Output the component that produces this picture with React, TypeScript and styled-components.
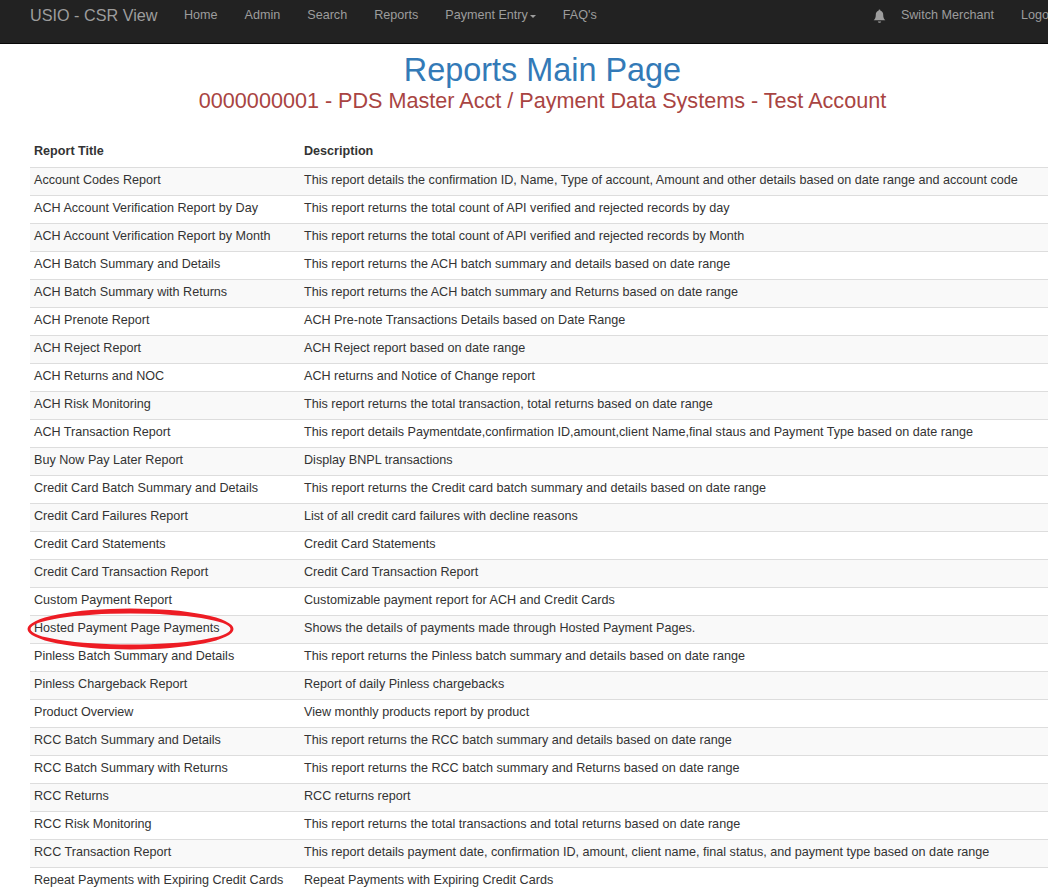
import styled, { createGlobalStyle } from "styled-components";

type Report = [string, string];

const reports: Report[] = [
  ["Account Codes Report", "This report details the confirmation ID, Name, Type of account, Amount and other details based on date range and account code"],
  ["ACH Account Verification Report by Day", "This report returns the total count of API verified and rejected records by day"],
  ["ACH Account Verification Report by Month", "This report returns the total count of API verified and rejected records by Month"],
  ["ACH Batch Summary and Details", "This report returns the ACH batch summary and details based on date range"],
  ["ACH Batch Summary with Returns", "This report returns the ACH batch summary and Returns based on date range"],
  ["ACH Prenote Report", "ACH Pre-note Transactions Details based on Date Range"],
  ["ACH Reject Report", "ACH Reject report based on date range"],
  ["ACH Returns and NOC", "ACH returns and Notice of Change report"],
  ["ACH Risk Monitoring", "This report returns the total transaction, total returns based on date range"],
  ["ACH Transaction Report", "This report details Paymentdate,confirmation ID,amount,client Name,final staus and Payment Type based on date range"],
  ["Buy Now Pay Later Report", "Display BNPL transactions"],
  ["Credit Card Batch Summary and Details", "This report returns the Credit card batch summary and details based on date range"],
  ["Credit Card Failures Report", "List of all credit card failures with decline reasons"],
  ["Credit Card Statements", "Credit Card Statements"],
  ["Credit Card Transaction Report", "Credit Card Transaction Report"],
  ["Custom Payment Report", "Customizable payment report for ACH and Credit Cards"],
  ["Hosted Payment Page Payments", "Shows the details of payments made through Hosted Payment Pages."],
  ["Pinless Batch Summary and Details", "This report returns the Pinless batch summary and details based on date range"],
  ["Pinless Chargeback Report", "Report of daily Pinless chargebacks"],
  ["Product Overview", "View monthly products report by product"],
  ["RCC Batch Summary and Details", "This report returns the RCC batch summary and details based on date range"],
  ["RCC Batch Summary with Returns", "This report returns the RCC batch summary and Returns based on date range"],
  ["RCC Returns", "RCC returns report"],
  ["RCC Risk Monitoring", "This report returns the total transactions and total returns based on date range"],
  ["RCC Transaction Report", "This report details payment date, confirmation ID, amount, client name, final status, and payment type based on date range"],
  ["Repeat Payments with Expiring Credit Cards", "Repeat Payments with Expiring Credit Cards"],
];

const GlobalStyle = createGlobalStyle`
  html, body {
    margin: 0;
    height: 895px;
    overflow: hidden;
    background: #fff;
  }
  body {
    font-family: "Liberation Sans", Arial, sans-serif;
    font-size: 12.6px;
    color: #333;
  }
`;

const Page = styled.div`
  width: 1085px;
`;

const Navbar = styled.nav`
  display: flex;
  align-items: flex-start;
  height: 43px;
  padding: 0 12px 0 30px;
  background: #222;
  border-bottom: 1px solid #080808;
`;

const Brand = styled.a`
  font-size: 16.2px;
  line-height: 31px;
  color: #9d9d9d;
  margin-right: 13px;
`;

const NavItem = styled.a`
  display: flex;
  align-items: center;
  gap: 2px;
  height: 30px;
  padding: 0 13.5px;
  color: #9d9d9d;
`;

const BellItem = styled.a`
  display: flex;
  align-items: center;
  height: 31px;
  padding-right: 1px;
`;

const Caret = styled.span`
  width: 0;
  height: 0;
  margin-top: 2px;
  border-top: 3.6px solid #9d9d9d;
  border-left: 3.6px solid transparent;
  border-right: 3.6px solid transparent;
`;

const Bell = styled.svg`
  width: 13px;
  height: 16px;
  fill: #9d9d9d;
`;

const RightNav = styled.div`
  display: flex;
  margin-left: auto;
`;

const Heading = styled.header`
  padding-top: 8px;
  text-align: center;
`;

const Title = styled.h1`
  margin: 0;
  font-size: 32.4px;
  font-weight: 400;
  line-height: 36px;
  color: #337ab7;
`;

const Subtitle = styled.h2`
  margin: 0;
  font-size: 21.6px;
  font-weight: 400;
  line-height: 26px;
  color: #a94442;
`;

const TableWrap = styled.div`
  padding: 21px 30px 0;
`;

const Table = styled.table`
  width: 100%;
  border-collapse: collapse;
`;

const HeadCell = styled.th`
  height: 32px;
  padding: 0 4px;
  border-bottom: 1.5px solid #ddd;
  text-align: left;
  font-weight: 700;
`;

const Row = styled.tr<{ $striped: boolean }>`
  background: ${(p) => (p.$striped ? "#f9f9f9" : "#fff")};
`;

const Cell = styled.td<{ $first?: boolean }>`
  position: relative;
  width: ${(p) => (p.$first ? "262px" : "auto")};
  height: 23px;
  padding: 0 4px 4px;
  border-bottom: 1px solid #ddd;
  white-space: nowrap;
`;

const Oval = styled.svg`
  position: absolute;
  left: -3px;
  top: -8px;
  width: 207px;
  height: 42px;
  fill: #ed1c24;
  fill-rule: evenodd;
  pointer-events: none;
`;

export default function App() {
  return (
    <Page>
      <GlobalStyle />
      <Navbar>
        <Brand>USIO - CSR View</Brand>
        <NavItem>Home</NavItem>
        <NavItem>Admin</NavItem>
        <NavItem>Search</NavItem>
        <NavItem>Reports</NavItem>
        <NavItem>
          Payment Entry
          <Caret />
        </NavItem>
        <NavItem>FAQ's</NavItem>
        <RightNav>
          <BellItem>
            <Bell viewBox="0 0 14 15">
              <path d="M7 0.4c.6 0 1 .4 1 1v.5c2 .5 3 2.2 3 4.3 0 3 .6 4.4 2.3 6H.7c1.700-1.600 2.300-3 2.300-6 0-2.100 1-3.800 3-4.300v-.5c0-.6.400-1 1-1z" />
              <path d="M5.200 13.300h3.600c-.2 1-.9 1.500-1.800 1.500s-1.600-.5-1.800-1.500z" />
            </Bell>
          </BellItem>
          <NavItem>Switch Merchant</NavItem>
          <NavItem>Logout</NavItem>
        </RightNav>
      </Navbar>
      <Heading>
        <Title>Reports Main Page</Title>
        <Subtitle>0000000001 - PDS Master Acct / Payment Data Systems - Test Account</Subtitle>
      </Heading>
      <TableWrap>
        <Table>
          <thead>
            <tr>
              <HeadCell>Report Title</HeadCell>
              <HeadCell>Description</HeadCell>
            </tr>
          </thead>
          <tbody>
            {reports.map(([title, description], i) => (
              <Row key={title} $striped={i % 2 === 0}>
                <Cell $first>
                  {title}
                  {title.startsWith("Hosted") && (
                    <Oval viewBox="0 0 207 42">
                      <path d="M0.500 21a103 20.500 0 1 0 206 0a103 20.500 0 1 0 -206 0zM3.500 21a100 15.500 0 1 1 200 0a100 15.500 0 1 1 -200 0z" />
                    </Oval>
                  )}
                </Cell>
                <Cell>{description}</Cell>
              </Row>
            ))}
          </tbody>
        </Table>
      </TableWrap>
    </Page>
  );
}
